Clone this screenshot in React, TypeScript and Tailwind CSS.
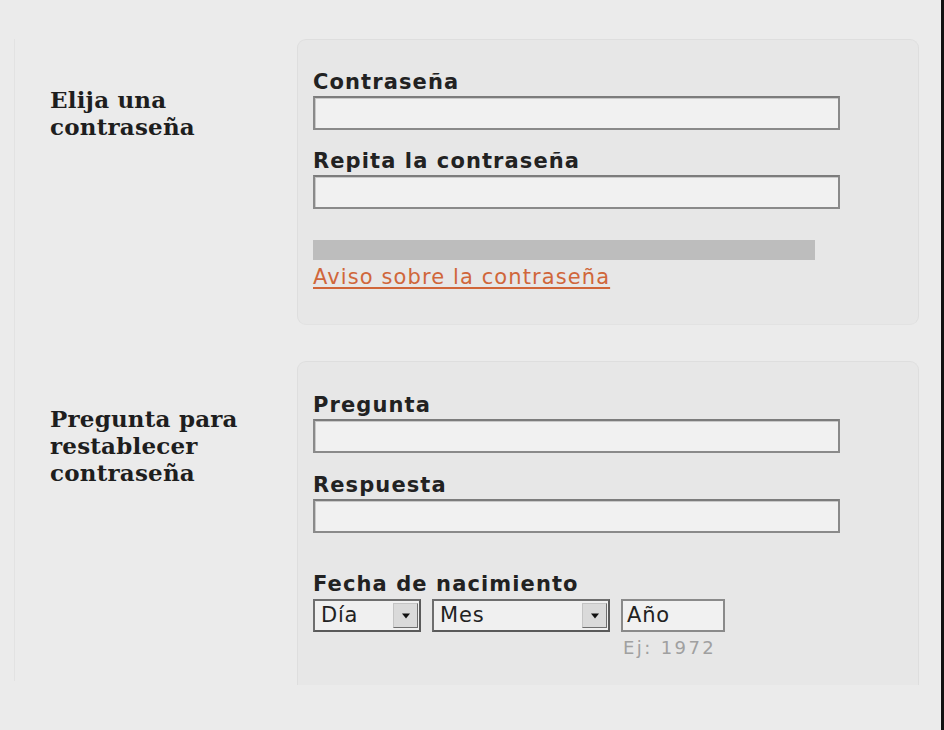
import React from 'react';

const sans = { fontFamily: '"DejaVu Sans", Verdana, sans-serif' };
const serif = { fontFamily: '"DejaVu Serif", Georgia, serif' };

function Field({ label }: { label: string }) {
  return (
    <div className="flex flex-col">
      <label className="text-[21px] leading-[26px] tracking-[1.1px] font-bold text-[#222]" style={sans}>
        {label}
      </label>
      <div className="mt-[1px] h-[34px] w-[527px] border-2 border-[#8a8a8a] border-t-[#7c7c7c] bg-[#f1f1f1] shadow-[inset_1px_1px_0_#c9c9c9]" />
    </div>
  );
}

function Select({ text, width }: { text: string; width: string }) {
  return (
    <div
      className={`${width} h-[33px] flex items-stretch border-2 border-t-[#6e6e6e] border-l-[#6e6e6e] border-b-[#5a5a5a] border-r-[#5a5a5a] bg-[#f0f0f0]`}
    >
      <span className="flex-1 pl-[6px] text-[21px] leading-[28px] tracking-[0.8px] text-[#222]" style={sans}>
        {text}
      </span>
      <span className="w-[25px] my-[2px] mr-[1px] flex items-center justify-center bg-[#dadada] border border-[#c4c4c4] border-b-[#6f6f6f] border-r-[#6f6f6f]">
        <svg width="10" height="6" viewBox="0 0 10 6">
          <path d="M1 0.5h8L5 5.5z" fill="#111" />
        </svg>
      </span>
    </div>
  );
}

export default function App() {
  return (
    <div className="w-[944px] h-[730px] bg-[#ebebeb] flex overflow-hidden">
      <div className="flex-1 flex pt-[39px]">
        <div className="w-[14px] shrink-0" />
        <div className="w-[1px] h-[642px] bg-[#e2e2e2] shrink-0" />
        <div className="flex flex-col gap-[36px]">
          {/* section 1 */}
          <div className="flex">
            <div className="w-[282px] shrink-0 pl-[35px] pt-[47px]">
              <h2 className="text-[23px] leading-[27px] tracking-[0.2px] font-bold text-[#1e1e1e]" style={serif}>
                Elija una
                <br />
                contraseña
              </h2>
            </div>
            <div className="w-[622px] h-[286px] rounded-[9px] bg-[#e7e7e7] border border-[#dedede] border-b-[#e2e2e2] pl-[15px] pt-[29px]">
              <Field label="Contraseña" />
              <div className="h-[18px]" />
              <Field label="Repita la contraseña" />
              <div className="mt-[31px] h-[20px] w-[502px] bg-[#bdbdbd]" />
              <a
                href="#"
                className="block mt-[4px] text-[21px] leading-[27px] tracking-[1.1px] text-[#d0663a] underline underline-offset-[3px]"
                style={sans}
              >
                Aviso sobre la contraseña
              </a>
            </div>
          </div>
          {/* section 2 */}
          <div className="flex">
            <div className="w-[282px] shrink-0 pl-[35px] pt-[44px]">
              <h2 className="text-[23px] leading-[27px] tracking-[0.2px] font-bold text-[#1e1e1e]" style={serif}>
                Pregunta para
                <br />
                restablecer
                <br />
                contraseña
              </h2>
            </div>
            <div className="w-[622px] h-[324px] rounded-t-[9px] bg-[#e7e7e7] border border-[#dedede] border-b-0 pl-[15px] pt-[30px]">
              <Field label="Pregunta" />
              <div className="h-[19px]" />
              <Field label="Respuesta" />
              <div className="h-[38px]" />
              <label className="block text-[21px] leading-[26px] tracking-[1.1px] font-bold text-[#222]" style={sans}>
                Fecha de nacimiento
              </label>
              <div className="mt-[2px] flex gap-[11px]">
                <Select text="Día" width="w-[108px]" />
                <Select text="Mes" width="w-[178px]" />
                <div
                  className="w-[104px] h-[33px] border-2 border-[#8a8a8a] bg-[#f1f1f1] pl-[4px] text-[21px] leading-[28px] tracking-[0.8px] text-[#222]"
                  style={sans}
                >
                  Año
                </div>
              </div>
              <div className="mt-[5px] pl-[310px] text-[18px] leading-[22px] tracking-[2.4px] text-[#a0a0a0]" style={sans}>
                Ej: 1972
              </div>
            </div>
          </div>
        </div>
      </div>
      <div className="w-[3px] bg-[#111] shrink-0" />
    </div>
  );
}
